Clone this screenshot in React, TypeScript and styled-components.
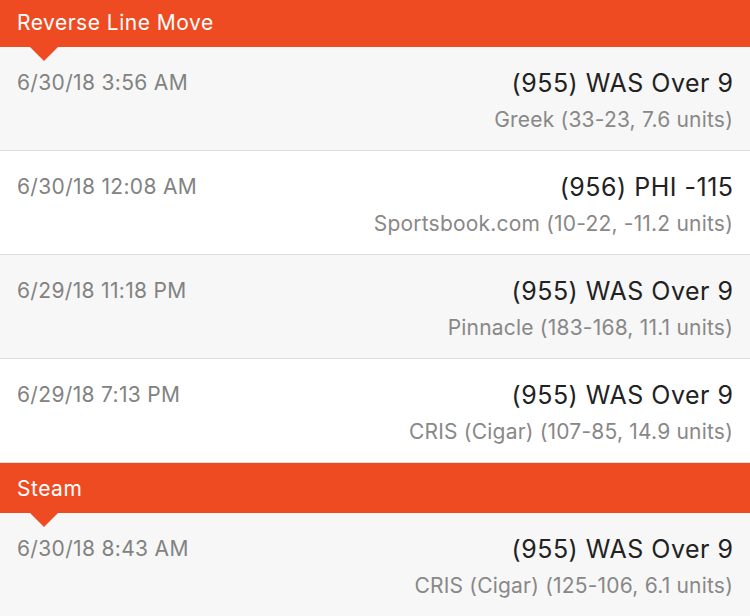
import React from "react";
import styled, { createGlobalStyle } from "styled-components";

const Global = createGlobalStyle`
  html, body { margin: 0; padding: 0; background: #ffffff; overflow: hidden; }
  body { font-family: "Inter", "Lato", sans-serif; -webkit-font-smoothing: antialiased; }
`;

const Page = styled.div`
  width: 750px;
  margin-top: -3px;
  display: flex;
  flex-direction: column;
`;

const SectionHeader = styled.div`
  position: relative;
  height: 50px;
  background: #ef4b22;
  color: #ffffff;
  font-size: 21px;
  letter-spacing: 0.5px;
  display: flex;
  align-items: center;
  padding: 0 17px;
  box-sizing: border-box;
  z-index: 1;
  &::after {
    content: "";
    position: absolute;
    left: 30px;
    bottom: -14px;
    width: 0;
    height: 0;
    border-left: 14px solid transparent;
    border-right: 14px solid transparent;
    border-top: 14px solid #ef4b22;
  }
`;

const Row = styled.div<{ $alt: boolean }>`
  height: 104px;
  box-sizing: border-box;
  background: ${(p) => (p.$alt ? "#f7f7f7" : "#ffffff")};
  border-bottom: 1px solid #dedede;
  display: flex;
  justify-content: space-between;
  align-items: flex-start;
  padding: 21px 17px 0 17px;
`;

const DateText = styled.div`
  font-size: 21px;
  line-height: 30px;
  letter-spacing: 0.33px;
  color: #828282;
`;

const Right = styled.div`
  display: flex;
  flex-direction: column;
  align-items: flex-end;
`;

const Pick = styled.div`
  font-size: 25px;
  line-height: 30px;
  letter-spacing: 0.5px;
  margin-right: -0.5px;
  color: #222222;
`;

const Capper = styled.div`
  font-size: 21px;
  line-height: 30px;
  letter-spacing: 0.2px;
  margin-top: 7px;
  color: #888888;
`;

type Item = { date: string; pick: string; capper: string };

const sections: { title: string; items: Item[] }[] = [
  {
    title: "Reverse Line Move",
    items: [
      { date: "6/30/18 3:56 AM", pick: "(955) WAS Over 9", capper: "Greek (33-23, 7.6 units)" },
      { date: "6/30/18 12:08 AM", pick: "(956) PHI -115", capper: "Sportsbook.com (10-22, -11.2 units)" },
      { date: "6/29/18 11:18 PM", pick: "(955) WAS Over 9", capper: "Pinnacle (183-168, 11.1 units)" },
      { date: "6/29/18 7:13 PM", pick: "(955) WAS Over 9", capper: "CRIS (Cigar) (107-85, 14.9 units)" },
    ],
  },
  {
    title: "Steam",
    items: [
      { date: "6/30/18 8:43 AM", pick: "(955) WAS Over 9", capper: "CRIS (Cigar) (125-106, 6.1 units)" },
    ],
  },
];

export default function App() {
  return (
    <>
      <Global />
      <Page>
        {sections.map((s) => (
          <React.Fragment key={s.title}>
            <SectionHeader>{s.title}</SectionHeader>
            {s.items.map((it, i) => (
              <Row key={i} $alt={i % 2 === 0}>
                <DateText>{it.date}</DateText>
                <Right>
                  <Pick>{it.pick}</Pick>
                  <Capper>{it.capper}</Capper>
                </Right>
              </Row>
            ))}
          </React.Fragment>
        ))}
      </Page>
    </>
  );
}
